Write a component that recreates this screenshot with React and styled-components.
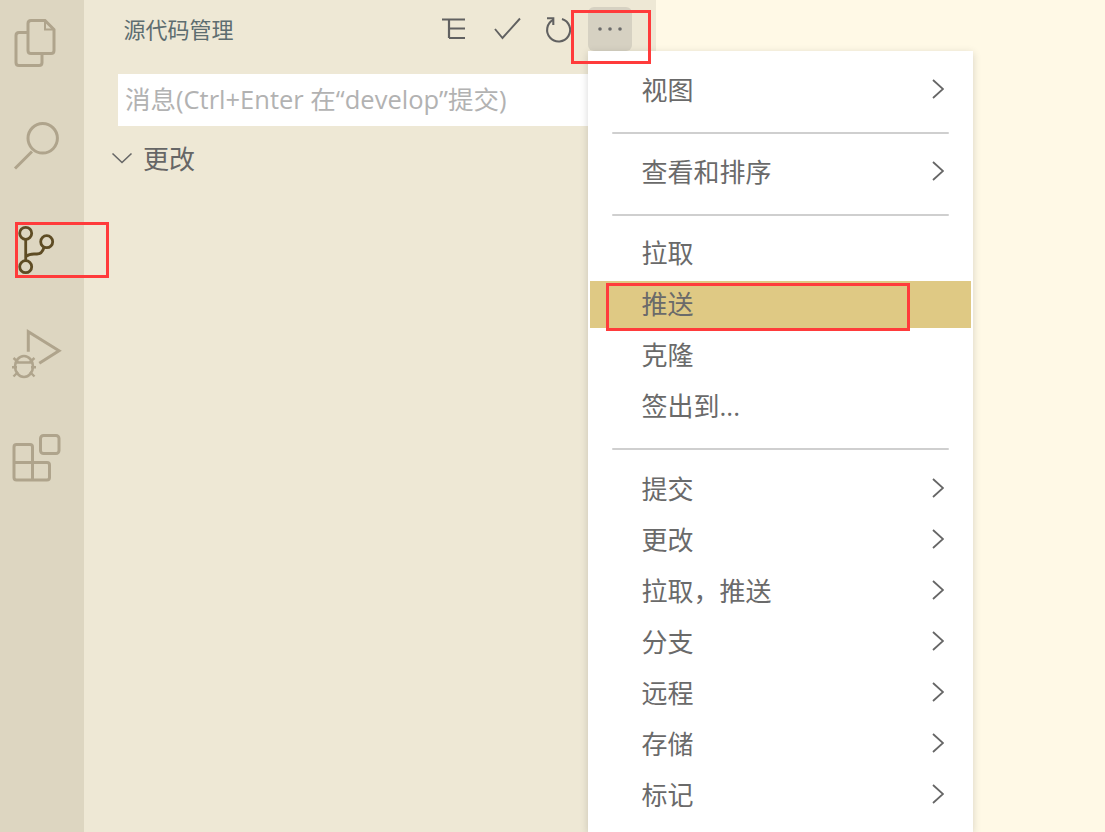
import React from "react";
import styled, { createGlobalStyle } from "styled-components";

const Global = createGlobalStyle`
  html, body { margin: 0; padding: 0; height: 100%; overflow: hidden; }
  #root { height: 100%; }
  * { box-sizing: border-box; }
`;

const Page = styled.div`
  position: relative;
  display: flex;
  width: 100%;
  height: 100vh;
  overflow: hidden;
  font-family: "Open Sans", "Noto Sans CJK SC", sans-serif;
  color: #616161;
  background: #fff9e6;
`;

const ActivityBar = styled.nav`
  flex: 0 0 84px;
  display: flex;
  flex-direction: column;
  gap: 23px;
  padding-top: 2px;
  background: #ddd6c1;
`;

const ActivityIcon = styled.svg`
  display: block;
  width: 84px;
  height: 80px;
  fill: none;
  stroke: ${(p) => (p.$active ? "#5e4c24" : "#afa48c")};
  stroke-width: ${(p) => (p.$active ? 2.8 : 3)}px;
`;

const SideBar = styled.aside`
  flex: 0 0 572px;
  display: flex;
  flex-direction: column;
  background: #eee8d5;
`;

const Header = styled.header`
  display: flex;
  align-items: center;
  height: 44px;
  margin-top: 7px;
  padding: 0 24px 0 39.5px;
`;

const Title = styled.h1`
  margin: 0;
  font-size: 22px;
  font-weight: 400;
  color: #5d6d70;
  line-height: 44px;
`;

const Toolbar = styled.div`
  display: flex;
  gap: 7px;
  margin-left: auto;
`;

const ToolButton = styled.button`
  display: flex;
  align-items: center;
  justify-content: center;
  width: 44px;
  height: 44px;
  padding: 0;
  border: 0;
  border-radius: 6px;
  background: ${(p) => (p.$active ? "#d6d1c2" : "transparent")};
`;

const ToolIcon = styled.svg`
  display: block;
  width: 30px;
  height: 30px;
  fill: none;
  stroke: #616161;
  stroke-width: ${(p) => p.$weight || 2.2}px;
`;

const Dots = styled(ToolIcon)`
  fill: #6b6b6b;
  stroke: none;
`;

const MessageBox = styled.div`
  height: 52px;
  margin: 23px 24px 0 34px;
  padding: 0 0 2px 7px;
  background: #fff;
  color: #b2b2b2;
  font-size: 25.5px;
  line-height: 50px;
  white-space: nowrap;
  overflow: hidden;
`;

const Section = styled.div`
  display: flex;
  align-items: center;
  gap: 10px;
  height: 40px;
  margin-top: 13px;
  padding: 0 0 2px 27px;
  font-size: 26px;
  color: #666;
`;

const Chevron = styled.svg`
  display: block;
  flex: none;
  fill: none;
  stroke: #666;
  stroke-width: ${(p) => p.$weight || 1.8}px;
`;

const Editor = styled.main`
  flex: 1;
  background: #fff9e6;
`;

const Menu = styled.div`
  position: absolute;
  left: 588px;
  top: 51px;
  bottom: 0;
  width: 385px;
  display: flex;
  flex-direction: column;
  padding: 14px 2px 0;
  background: #fff;
  box-shadow: 0 2px 8px rgba(0, 0, 0, 0.16);
  overflow: hidden;
`;

const Row = styled.div`
  flex: none;
  display: flex;
  align-items: center;
  justify-content: space-between;
  height: 47px;
  margin: 2px 0;
  padding: 0 27px 3px 51.5px;
  font-size: 26px;
  color: #6a6a6a;
  background: ${(p) => (p.$hover ? "#dfc984" : "transparent")};
`;

const Separator = styled.div`
  flex: none;
  height: 2px;
  margin: 16px 22px ${(p) => (p.$tight ? 12.5 : 14)}px;
  background: #cfcfcf;
  border-radius: 1px;
`;

const Mark = styled.div`
  position: absolute;
  border: 3px solid #ff3b3b;
  pointer-events: none;
`;

const MarkMore = styled(Mark)`
  left: 571px;
  top: 10px;
  width: 80px;
  height: 54px;
`;
const MarkGit = styled(Mark)`
  left: 15px;
  top: 222px;
  width: 94px;
  height: 56px;
`;
const MarkPush = styled(Mark)`
  left: 606px;
  top: 283px;
  width: 304px;
  height: 48px;
`;

const Right = () => (
  <Chevron width="12" height="20" viewBox="0 0 12 20">
    <path d="M1 1 L11 10 L1 19" />
  </Chevron>
);

const menu = [
  [["视图", true]],
  [["查看和排序", true]],
  [["拉取"], ["推送", false, true], ["克隆"], ["签出到..."]],
  [["提交", true], ["更改", true], ["拉取\uFF0C推送", true], ["分支", true], ["远程", true], ["存储", true], ["标记", true]],
];

export default function App() {
  return (
    <Page>
      <Global />
      <ActivityBar>
        <ActivityIcon viewBox="0 0 84 80">
          <path d="M27 30.5 H19 Q16 30.5 16 33.5 V60.5 Q16 63.5 19 63.5 H39 Q42 63.5 42 60.5 V52" />
          <path d="M45 18.5 H31 Q28 18.5 28 21.5 V48.5 Q28 51.5 31 51.5 H51 Q54 51.5 54 48.5 V27.5 Z" />
          <path d="M45 18.5 V27.5 H54" strokeWidth="2" />
        </ActivityIcon>
        <ActivityIcon viewBox="0 0 84 80">
          <circle cx="42.7" cy="33.3" r="14.7" />
          <path d="M32 46.5 L15 63.5" />
        </ActivityIcon>
        <ActivityIcon $active viewBox="0 0 84 80">
          <circle cx="25.7" cy="25.3" r="6" />
          <circle cx="25.7" cy="58.7" r="6" />
          <circle cx="46.7" cy="33.7" r="6" />
          <path d="M25.7 31.3 V52.7" />
          <path d="M26 48.5 Q29 46 34 46 H37 Q42 46 44 39.5" />
        </ActivityIcon>
        <ActivityIcon viewBox="0 0 84 80">
          <path d="M28.3 40.7 V20.7 L59 39.7 L39.3 52.3" />
          <ellipse cx="24" cy="55.5" rx="9" ry="10.5" strokeWidth="2.6" />
          <path d="M15 51.5 H33 M12 56.3 H17 M31 56.3 H36 M13.5 47 L18 51 M34.5 47 L30 51 M13.5 65.5 L18 61 M34.5 65.5 L30 61" strokeWidth="2.4" />
        </ActivityIcon>
        <ActivityIcon viewBox="0 0 84 80">
          <rect x="40.5" y="21.5" width="18.5" height="18" rx="3" />
          <path d="M32.5 48.5 V33 Q32.5 30.5 30 30.5 H16.5 Q14 30.5 14 33 V63.5 Q14 66 16.5 66 H47 Q49.5 66 49.5 63.5 V51 Q49.5 48.5 47 48.5 H14 M32.5 48.5 V66" />
        </ActivityIcon>
      </ActivityBar>
      <SideBar>
        <Header>
          <Title>源代码管理</Title>
          <Toolbar>
            <ToolButton aria-label="树">
              <ToolIcon viewBox="0 0 30 30">
                <path d="M3 5.5 H26 M10 5.5 V24 M10 14.5 H26 M10 24 H26" transform="translate(-3 0)" />
              </ToolIcon>
            </ToolButton>
            <ToolButton aria-label="提交">
              <ToolIcon viewBox="0 0 30 30" $weight={1.9}>
                <path d="M2 15 L9.5 24 L27 4.5" />
              </ToolIcon>
            </ToolButton>
            <ToolButton aria-label="刷新">
              <ToolIcon viewBox="0 0 30 30" $weight={2.1}>
                <path d="M9.3 5.8 A11.5 11.5 0 1 0 18 5" />
                <path d="M3 4.3 H9.3 V11" />
              </ToolIcon>
            </ToolButton>
            <ToolButton $active aria-label="更多">
              <Dots viewBox="0 0 30 30">
                <circle cx="5" cy="15" r="1.8" />
                <circle cx="15" cy="15" r="1.8" />
                <circle cx="25" cy="15" r="1.8" />
              </Dots>
            </ToolButton>
          </Toolbar>
        </Header>
        <MessageBox>消息(Ctrl+Enter 在“develop”提交)</MessageBox>
        <Section>
          <Chevron width="22" height="12" viewBox="0 0 22 12" $weight={1.6}>
            <path d="M1.5 1.5 L11 10.5 L20.5 1.5" />
          </Chevron>
          更改
        </Section>
      </SideBar>
      <Editor />
      <Menu>
        {menu.map((group, i) => (
          <React.Fragment key={i}>
            {i > 0 && <Separator $tight={i < 3} />}
            {group.map(([label, sub, hover]) => (
              <Row key={label} $hover={hover}>
                {label}
                {sub && <Right />}
              </Row>
            ))}
          </React.Fragment>
        ))}
      </Menu>
      <MarkMore />
      <MarkGit />
      <MarkPush />
    </Page>
  );
}
